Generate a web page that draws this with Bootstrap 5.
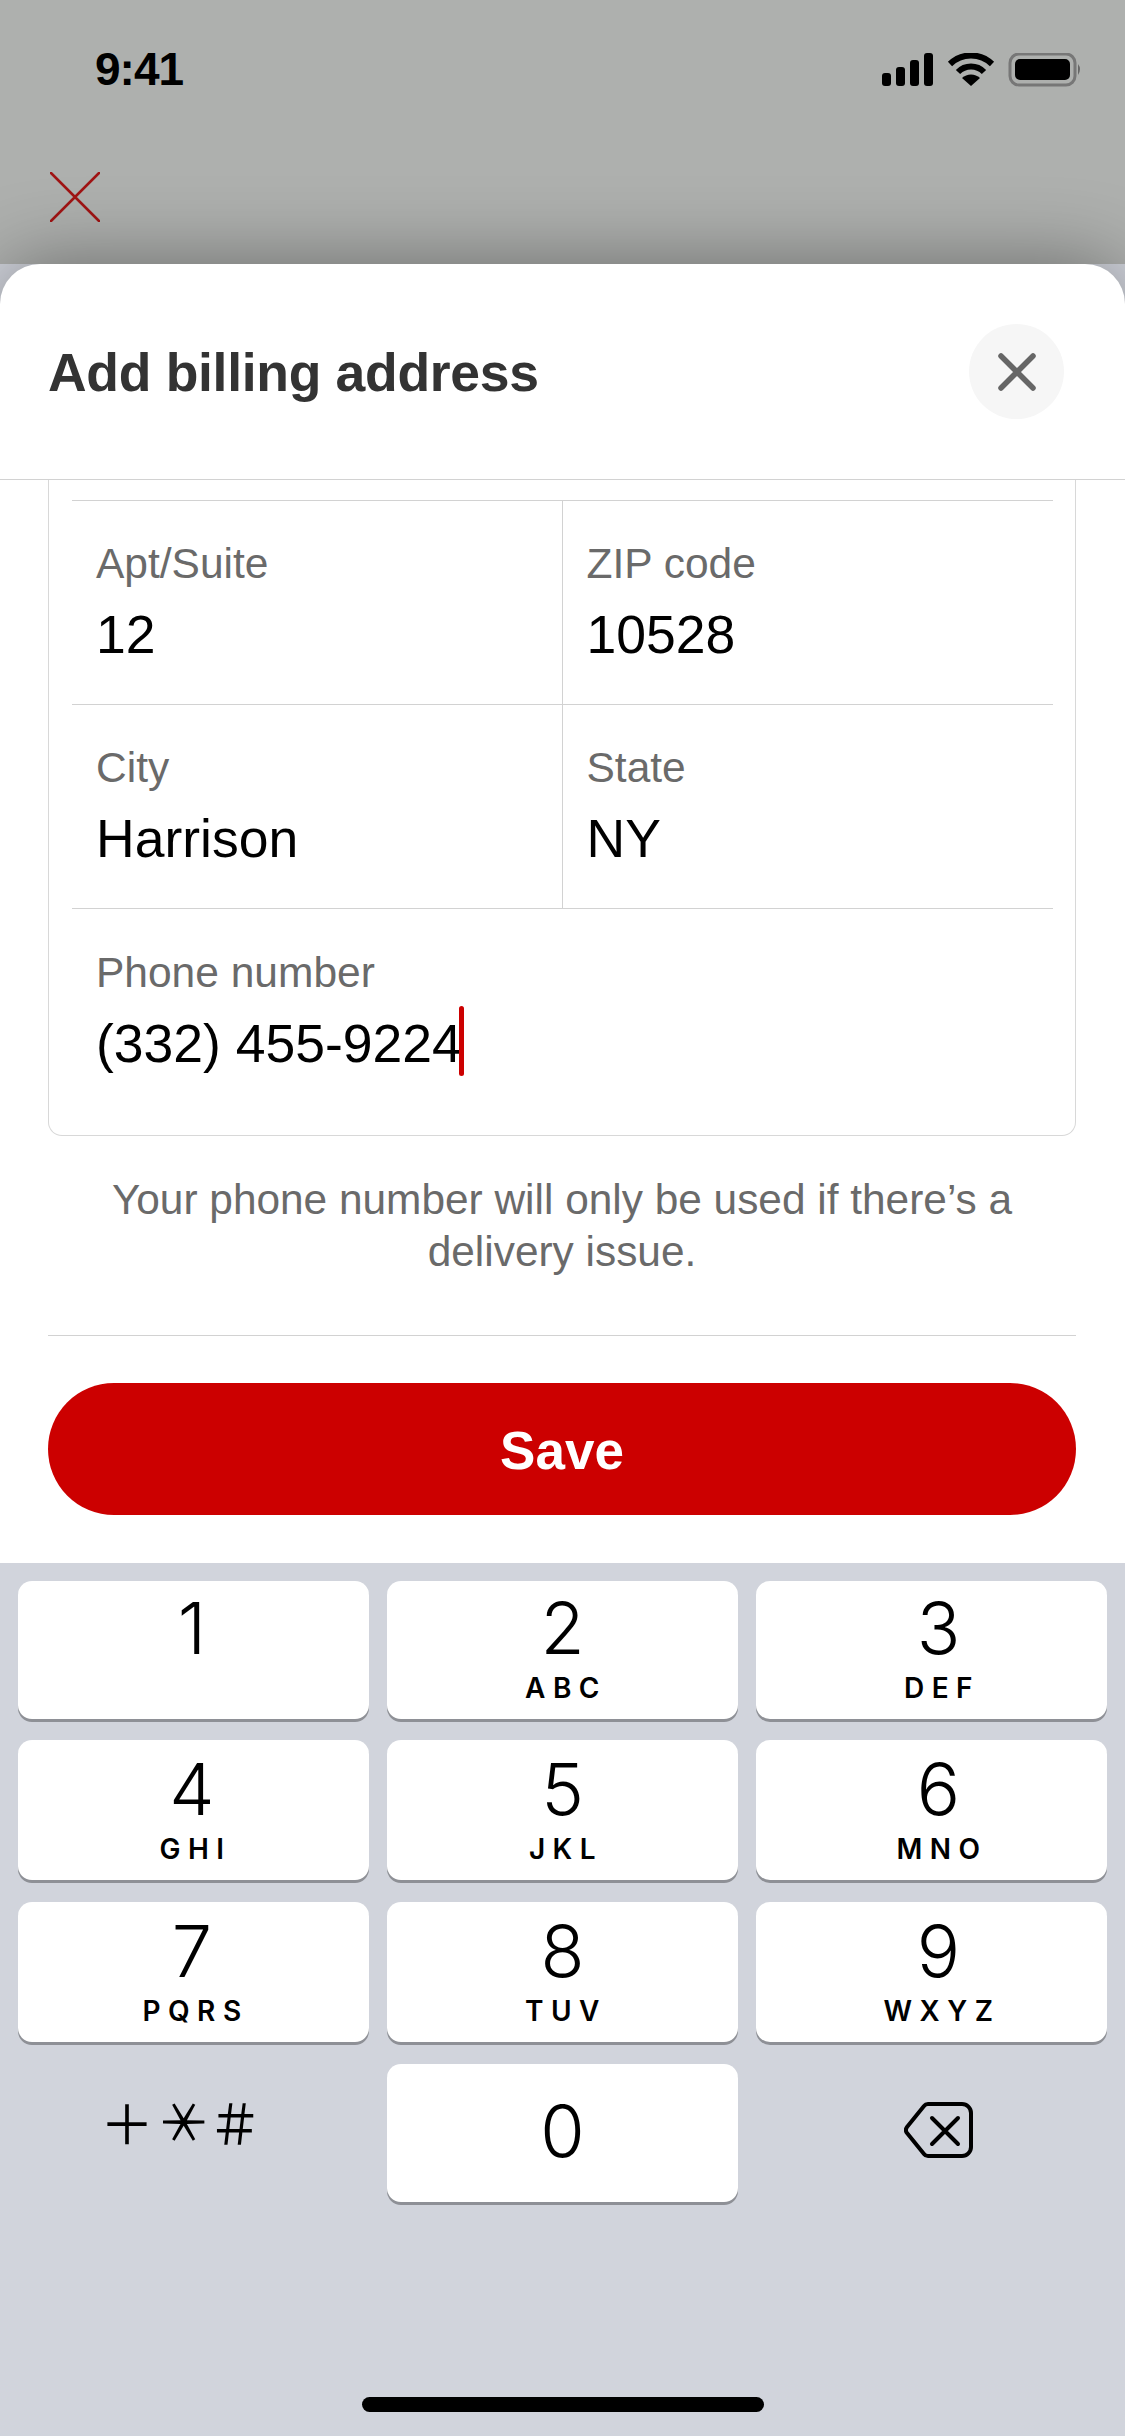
<!DOCTYPE html>
<html lang="en">
<head>
    <meta charset="UTF-8">
    <title>Add billing address</title>
    <link href="https://cdn.jsdelivr.net/npm/bootstrap@5.3.0/dist/css/bootstrap.min.css" rel="stylesheet">
    <style>
        body { width: 1125px; height: 2436px; overflow: hidden; background: #d1d4dc; font-family: "Liberation Sans", Arial, sans-serif; color: #000; }
        .dim-top { height: 264px; background: #aeb0ae; }
        .status-row { height: 96px; padding: 43px 43px 0 95px; }
        .clock { font-size: 46px; line-height: 52px; font-weight: 700; letter-spacing: -1px; }
        .status-row svg { margin-top: 10px; }
        .back-x { display: block; margin: 76px 0 0 50px; }
        .sheet { height: 1299px; background: #fff; border-radius: 40px 40px 0 0; box-shadow: 0 0 80px rgba(0, 0, 0, .4); position: relative; }
        .sheet-head { height: 216px; padding: 60px 61px 0 48px; border-bottom: 1px solid #d2d2d2; }
        .sheet-title { font-size: 53.5px; line-height: 60px; font-weight: 700; color: #333; letter-spacing: -.3px; margin: 19px 0 0; }
        .close-round { width: 95px; height: 95px; border-radius: 50%; background: #f6f6f6; border: 0; padding: 0; }
        .scroll-part { height: 1083px; padding: 0 49px 0 48px; overflow: hidden; }
        .addr-box { height: 656px; border: 1px solid #d8d8d8; border-top: 0; border-radius: 0 0 14px 14px; padding: 20px 22px 0 23px; }
        .addr-row { height: 204px; border-top: 1px solid #d2d2d2; }
        .addr-cell { width: 49.9%; padding: 38px 0 0 24px; }
        .addr-cell + .addr-cell { border-left: 1px solid #d2d2d2; }
        .addr-label { font-size: 42.5px; line-height: 50px; color: #6a6a6a; }
        .addr-value { font-size: 53.5px; line-height: 62px; margin-top: 15px; }
        .caret-bar { display: inline-block; width: 5px; height: 70px; margin: -8px 0 -8px -3px; background: #c00; border-radius: 3px; vertical-align: -6px; }
        .phone-cell { padding-top: 39px; }
        .hint-text { font-size: 42.4px; line-height: 52px; color: #6a6a6a; text-align: center; margin: 38px 30px 0; }
        .hint-rule { border-top: 1px solid #d2d2d2; margin-top: 57px; }
        .save-btn { display: block; width: 100%; height: 132px; margin-top: 47px; padding-top: 4px; border: 0; border-radius: 66px; background: #c00; color: #fff; font-size: 53px; font-weight: 700; }
        .keypad { height: 873px; background: #d1d4dc; padding: 18px 19px 0 18px; position: relative; }
        .key-row { display: flex; gap: 18px; height: 140px; margin-bottom: 22px; }
        .key-row.first-row { height: 138px; margin-bottom: 21px; }
        .key-row.first-row .key-num { padding-top: 10px; }
        .key-row.first-row .key-num.zero-num { padding-top: 30px; }
        .pad-key { flex: 0 0 351px; background: #fff; border-radius: 14px; box-shadow: 0 3px 0 #8e9096; text-align: center; }
        .pad-key.near-key { padding-right: 3px; }
        .pad-key.far-key { padding-left: 14px; }
        .pad-key.bare { background: none; box-shadow: none; }
        .key-num { font-family: Inter, "Liberation Sans", sans-serif; font-weight: 300; font-size: 72px; line-height: 74px; padding-top: 12px; }
        .key-abc { font-family: Inter, "Liberation Sans", sans-serif; font-size: 28px; line-height: 30px; font-weight: 600; letter-spacing: 7.5px; margin-top: 8px; padding-left: 7px; }
        .key-sym { font-family: "Noto Sans CJK JP", sans-serif; font-size: 54px; line-height: 60px; padding: 28px 25px 0 0; }
        .key-star { display: inline-block; margin: 0 -5px 0 5px; transform: rotate(90deg); }
        .back-key { width: 70px; height: 58px; margin-top: 37px; }
        .home-bar { position: absolute; left: 362px; top: 834px; width: 402px; height: 15px; border-radius: 8px; background: #000; }
    </style>
</head>
<body>

<div class="dim-top">
    <div class="status-row d-flex justify-content-between align-items-start">
        <div class="clock">9:41</div>
        <svg width="200" height="34" viewBox="0 0 200 34" fill="#000">
            <rect x="0" y="20" width="9" height="13" rx="3"/>
            <rect x="14" y="14" width="9" height="19" rx="3"/>
            <rect x="28" y="7" width="9" height="26" rx="3"/>
            <rect x="42" y="0" width="9" height="33" rx="3"/>
            <path d="M68 11 A 30 30 0 0 1 110 11" fill="none" stroke="#000" stroke-width="6" stroke-linecap="butt"/>
            <path d="M76 19 A 18 18 0 0 1 102 19" fill="none" stroke="#000" stroke-width="6"/>
            <path d="M89 33 L80 25 A 13 13 0 0 1 98 25 Z"/>
            <rect x="128" y="1" width="65" height="31" rx="9" fill="none" stroke="#777" stroke-width="3"/>
            <rect x="133" y="6" width="55" height="21" rx="5"/>
            <path d="M196 11 q4 5 0 11 z" fill="#666"/>
        </svg>
    </div>
    <svg class="back-x" width="50" height="50" viewBox="0 0 50 50">
        <path d="M1 1 L49 49 M49 1 L1 49" stroke="#a01414" stroke-width="2.5" stroke-linecap="round"/>
    </svg>
</div>

<div class="sheet">
    <div class="sheet-head d-flex justify-content-between align-items-start">
        <h1 class="sheet-title">Add billing address</h1>
        <button class="close-round d-flex align-items-center justify-content-center" type="button" aria-label="Close">
            <svg width="38" height="38" viewBox="0 0 38 38">
                <path d="M3 3 L35 35 M35 3 L3 35" stroke="#666" stroke-width="5.5" stroke-linecap="round"/>
            </svg>
        </button>
    </div>

    <div class="scroll-part">
        <div class="addr-box">
            <div class="addr-row d-flex">
                <div class="addr-cell">
                    <div class="addr-label">Apt/Suite</div>
                    <div class="addr-value">12</div>
                </div>
                <div class="addr-cell flex-grow-1">
                    <div class="addr-label">ZIP code</div>
                    <div class="addr-value">10528</div>
                </div>
            </div>
            <div class="addr-row d-flex">
                <div class="addr-cell">
                    <div class="addr-label">City</div>
                    <div class="addr-value">Harrison</div>
                </div>
                <div class="addr-cell flex-grow-1">
                    <div class="addr-label">State</div>
                    <div class="addr-value">NY</div>
                </div>
            </div>
            <div class="addr-row">
                <div class="addr-cell phone-cell w-100">
                    <div class="addr-label">Phone number</div>
                    <div class="addr-value">(332) 455-9224<span class="caret-bar"></span></div>
                </div>
            </div>
        </div>
        <p class="hint-text">Your phone number will only be used if there’s a delivery issue.</p>
        <div class="hint-rule"></div>
        <button class="save-btn" type="button">Save</button>
    </div>
</div>

<div class="keypad">
    <div class="key-row first-row">
        <div class="pad-key near-key"><div class="key-num">1</div></div>
        <div class="pad-key"><div class="key-num">2</div><div class="key-abc">ABC</div></div>
        <div class="pad-key far-key"><div class="key-num">3</div><div class="key-abc">DEF</div></div>
    </div>
    <div class="key-row">
        <div class="pad-key near-key"><div class="key-num">4</div><div class="key-abc">GHI</div></div>
        <div class="pad-key"><div class="key-num">5</div><div class="key-abc">JKL</div></div>
        <div class="pad-key far-key"><div class="key-num">6</div><div class="key-abc">MNO</div></div>
    </div>
    <div class="key-row">
        <div class="pad-key near-key"><div class="key-num">7</div><div class="key-abc">PQRS</div></div>
        <div class="pad-key"><div class="key-num">8</div><div class="key-abc">TUV</div></div>
        <div class="pad-key far-key"><div class="key-num">9</div><div class="key-abc">WXYZ</div></div>
    </div>
    <div class="key-row first-row">
        <div class="pad-key bare"><div class="key-sym">＋<span class="key-star">＊</span>＃</div></div>
        <div class="pad-key"><div class="key-num zero-num">0</div></div>
        <div class="pad-key bare far-key d-flex align-items-start justify-content-center">
            <svg class="back-key" viewBox="0 0 70 58" fill="none" stroke="#000" stroke-width="4" stroke-linecap="round" stroke-linejoin="round">
                <path d="M24 3 H58 a9 9 0 0 1 9 9 V46 a9 9 0 0 1 -9 9 H24 a5 5 0 0 1 -4 -2 L3 32 a5 5 0 0 1 0 -6 L20 5 a5 5 0 0 1 4 -2 z"/>
                <path d="M28 17 L54 43 M54 17 L28 43"/>
            </svg>
        </div>
    </div>
    <div class="home-bar"></div>
</div>

<script src="https://cdn.jsdelivr.net/npm/bootstrap@5.3.0/dist/js/bootstrap.bundle.min.js"></script>
</body>
</html>
